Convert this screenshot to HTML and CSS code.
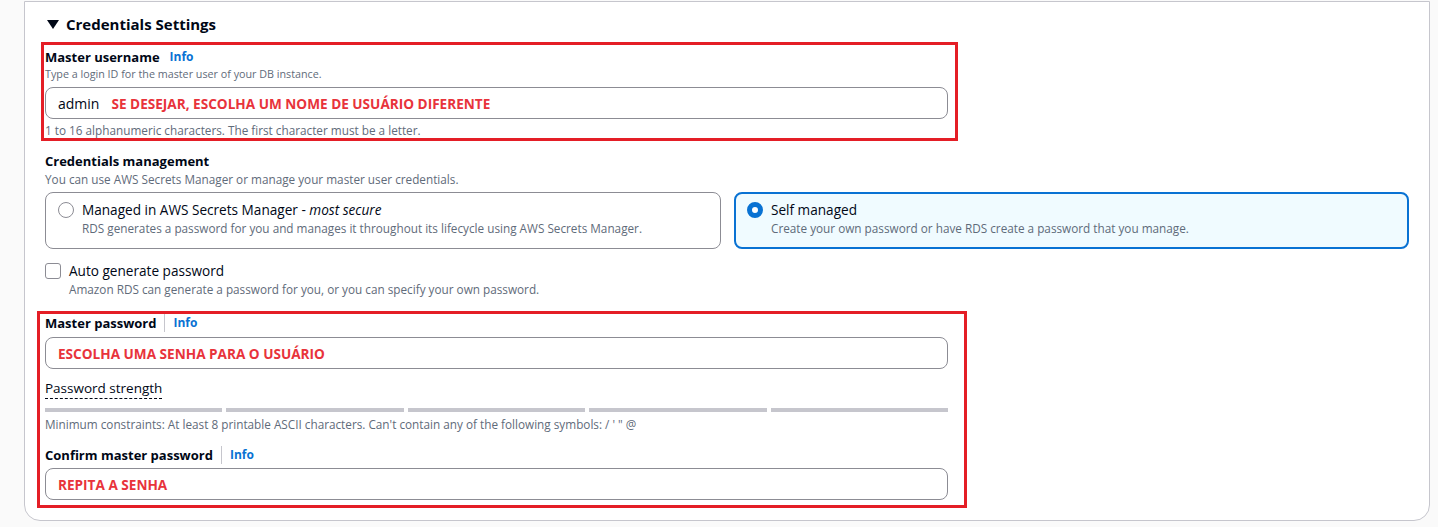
FILE: index.html
```html
<!DOCTYPE html>
<html lang="en">
<head>
<meta charset="utf-8">
<title>Credentials Settings</title>
<link rel="stylesheet" href="styles.css">
</head>
<body>
<div class="card">
  <div class="header">
    <svg class="caret" width="12" height="9" viewBox="0 0 12 9"><polygon points="0,0 12,0 6,9" fill="#000716"/></svg>
    <span class="title">Credentials Settings</span>
  </div>

  <div class="mark mark-user">
    <div class="label-row"><span class="label">Master username</span><span class="info">Info</span></div>
    <div class="desc first">Type a login ID for the master user of your DB instance.</div>
    <div class="input"><span class="value">admin</span><span class="note">SE DESEJAR, ESCOLHA UM NOME DE USUÁRIO DIFERENTE</span></div>
    <div class="desc constraint">1 to 16 alphanumeric characters. The first character must be a letter.</div>
  </div>

  <div class="group">
    <div class="label-row"><span class="label">Credentials management</span></div>
    <div class="desc">You can use AWS Secrets Manager or manage your master user credentials.</div>
    <div class="tiles">
      <div class="tile">
        <span class="radio"></span>
        <div class="tile-text">
          <div class="tile-label">Managed in AWS Secrets Manager - <em>most secure</em></div>
          <div class="desc">RDS generates a password for you and manages it throughout its lifecycle using AWS Secrets Manager.</div>
        </div>
      </div>
      <div class="tile selected">
        <span class="radio on"></span>
        <div class="tile-text">
          <div class="tile-label">Self managed</div>
          <div class="desc">Create your own password or have RDS create a password that you manage.</div>
        </div>
      </div>
    </div>
  </div>

  <div class="check-row">
    <span class="checkbox"></span>
    <div class="tile-text">
      <div class="tile-label">Auto generate password</div>
      <div class="desc">Amazon RDS can generate a password for you, or you can specify your own password.</div>
    </div>
  </div>

  <div class="mark mark-pass">
    <div class="label-row tight"><span class="label">Master password</span><span class="info sep">Info</span></div>
    <div class="input pass"><span class="note">ESCOLHA UMA SENHA PARA O USUÁRIO</span></div>
    <div class="strength"><span class="strength-label">Password strength</span></div>
    <div class="bars"><span></span><span></span><span></span><span></span><span></span></div>
    <div class="desc min">Minimum constraints: At least 8 printable ASCII characters. Can't contain any of the following symbols: / ' " @</div>
    <div class="label-row confirm"><span class="label">Confirm master password</span><span class="info sep">Info</span></div>
    <div class="input repeat"><span class="note">REPITA A SENHA</span></div>
  </div>
</div>
</body>
</html>
```

FILE: styles.css
```css
* { box-sizing: border-box; }
html, body { margin: 0; padding: 0; }
body {
  background: #fafafa;
  font-family: "Open Sans", "Liberation Sans", sans-serif;
  color: #000716;
  width: 1438px;
  height: 527px;
  overflow: hidden;
}
.card {
  margin: 1px 0 0 24px;
  width: 1406px;
  height: 520px;
  background: #fff;
  border: 1px solid #c6c6cd;
  border-radius: 0 0 16px 16px;
  padding: 10px 20px 0 20px;
}
.header {
  display: flex;
  align-items: center;
  height: 24px;
  padding-left: 2px;
}
.caret { margin-right: 7px; }
.title {
  font-size: 15px;
  font-weight: 700;
  line-height: 24px;
}
.mark {
  border: 3px solid #e41e26;
}
.mark-user {
  margin: 6px 0 0 -4px;
  width: 917px;
  padding: 2px 7px 0 1px;
}
.label-row {
  display: flex;
  align-items: center;
  height: 20px;
}
.label {
  font-size: 13px;
  font-weight: 700;
  line-height: 20px;
}
.info {
  font-size: 12px;
  font-weight: 700;
  color: #0972d3;
  margin-left: 10px;
  line-height: 16px;
}
.info.sep {
  margin-left: 8px;
  padding-left: 8px;
  border-left: 1px solid #c6c6cd;
  height: 18px;
  display: flex;
  align-items: center;
}
.desc {
  font-size: 11.75px;
  line-height: 16px;
  color: #5f6b7a;
}
.desc.first {
  font-size: 10.75px;
  margin-top: -1px;
}
.input {
  display: flex;
  align-items: center;
  height: 32px;
  border: 1px solid #8c8c94;
  border-radius: 8px;
  padding: 0 12px;
  margin-top: 5px;
  font-size: 14px;
}
.value { margin-right: 12px; }
.note {
  color: #e8333b;
  font-weight: 700;
  font-size: 13.6px;
}
.desc.constraint { margin-top: 3px; }
.group { margin-top: 10px; }
.tiles {
  display: grid;
  grid-template-columns: 676px 675px;
  column-gap: 13px;
  margin-top: 5px;
}
.tile {
  display: flex;
  align-items: flex-start;
  height: 57px;
  border: 1px solid #8c8c94;
  border-radius: 8px;
  padding: 7px 12px 0 12px;
}
.tile.selected {
  border: 2px solid #0972d3;
  background: #f0fbff;
  padding: 6px 11px 0 11px;
}
.radio {
  flex: none;
  width: 16px;
  height: 16px;
  border: 1px solid #8c8c94;
  border-radius: 50%;
  margin: 2px 8px 0 0;
  background: #fff;
}
.radio.on {
  border: 5px solid #0972d3;
}
.tile-label {
  font-size: 13.6px;
  line-height: 20px;
}
.check-row {
  display: flex;
  align-items: flex-start;
  margin-top: 12px;
}
.checkbox {
  flex: none;
  width: 16px;
  height: 16px;
  border: 1px solid #8c8c94;
  border-radius: 3px;
  margin: 2px 8px 0 0;
  background: #fff;
}
.mark-pass {
  margin: 14px 0 0 -8px;
  width: 930px;
  padding: 0 16px 5px 5px;
}
.label-row.tight { height: 17px; }
.input.pass { margin-top: 6px; }
.strength {
  margin-top: 8px;
  height: 20px;
  line-height: 20px;
}
.strength-label {
  font-size: 13.5px;
  border-bottom: 1px dashed #000716;
  padding-bottom: 1px;
}
.bars {
  display: flex;
  gap: 4px;
  margin-top: 11px;
}
.bars span {
  flex: 1;
  height: 4px;
  background: #c6c6cd;
}
.desc.min { margin-top: 4px; }
.label-row.confirm { margin-top: 13px; }
.input.repeat { margin-top: 3px; }
```
